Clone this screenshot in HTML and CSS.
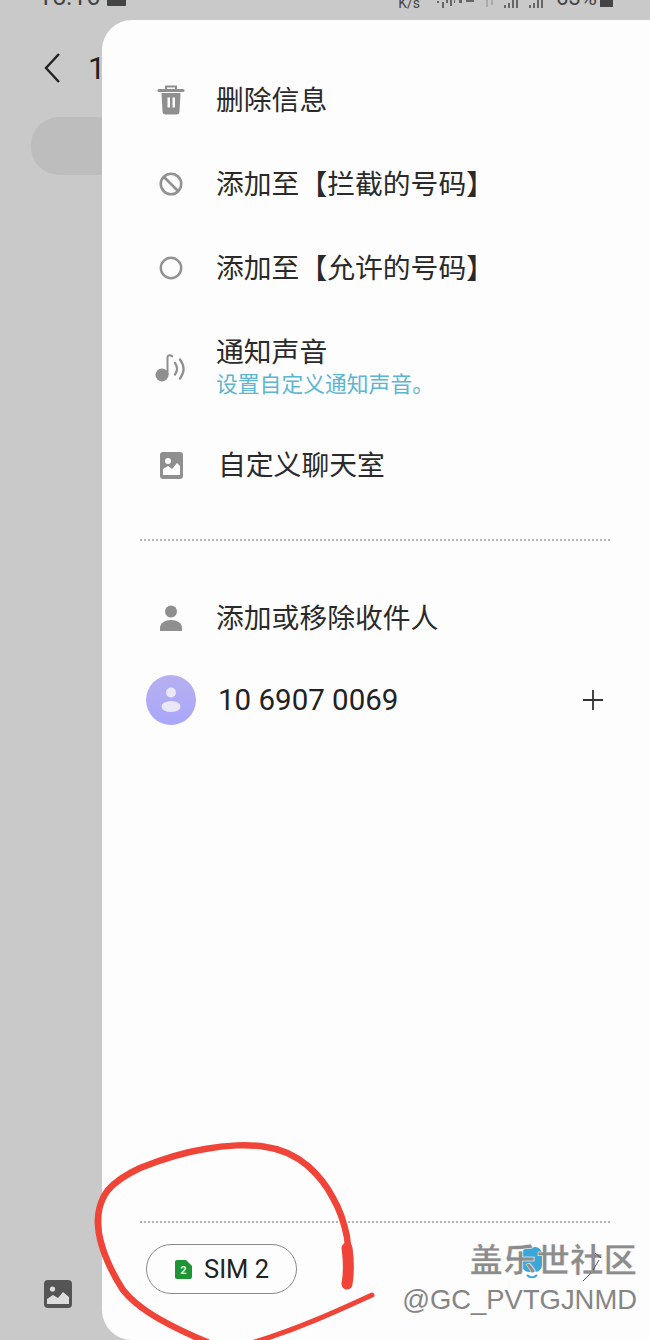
FILE: index.html
```html
<!DOCTYPE html>
<html lang="zh-CN">
<head>
    <meta charset="UTF-8">
    <meta name="viewport" content="width=device-width, initial-scale=1.0">
    <title>聊天室设置</title>
    <link rel="stylesheet" href="styles.css">
</head>
<body>
    <div class="screen">
        <!-- status bar, cut off by the top of the screenshot -->
        <div class="status-bar">
            <span class="status-time">15:16</span>
            <svg class="status-pic" width="19" height="14" viewBox="0 0 19 14"><rect width="19" height="14" rx="1" fill="#444"/></svg>
            <span class="status-speed">K/s</span>
            <svg class="status-signal" width="109" height="8" viewBox="0 0 109 8" fill="#666">
                <path d="M0 1h2v2H0zM5 2h2v6H5zM9 0h2v3H9zM13 0h2v6h-2zM17 0h1v3h-1zM22 0h3v3h-3zM29 0h8v2h-8z"/>
                <path d="M49 0h2v7h-2zM54 0h2v5h-2z" fill="#aaa"/>
                <path d="M67 5h2v3h-2zM71 3h2v5h-2zM75 0h2v8h-2zM79 0h2v8h-2zM92 5h2v3h-2zM96 3h2v5h-2zM100 0h2v8h-2zM104 0h2v8h-2z"/>
            </svg>
            <span class="status-battery">63%</span>
            <span class="battery-block"></span>
        </div>

        <!-- conversation behind the panel -->
        <div class="behind">
            <div class="behind-head">
                <svg width="18" height="32" viewBox="0 0 18 32"><path d="M16 2 3 16l13 14" fill="none" stroke="#222" stroke-width="2.4"/></svg>
                <span class="behind-title">1</span>
            </div>
            <div class="behind-bubble"></div>
            <svg class="behind-pic" width="28" height="28" viewBox="0 0 28 28">
                <rect width="28" height="28" rx="4" fill="#555"/>
                <circle cx="8.5" cy="9" r="2.6" fill="#ddd"/>
                <path d="M3 24v-5l6-4 5 3 5-6 6 5v7z" fill="#ddd"/>
            </svg>
        </div>

        <div class="panel">
            <ul class="menu">
                <li class="row">
                    <span class="row-icon">
                        <svg width="28" height="30" viewBox="0 0 28 30">
                            <path d="M9 4V1.500h10V4" fill="none" stroke="#8f8f8f" stroke-width="2"/>
                            <rect x="0.500" y="4" width="27" height="3" rx="1.500" fill="#8f8f8f"/>
                            <path d="M4.500 8h19l-1 18.500a3 3 0 0 1-3 3h-11a3 3 0 0 1-3-3z" fill="#8f8f8f"/>
                            <path d="M10.500 12.500h2.500v10h-2.500zM15.500 12.500H18v10h-2.500z" fill="#fff"/>
                        </svg>
                    </span>
                    <span class="row-label">删除信息</span>
                </li>
                <li class="row">
                    <span class="row-icon">
                        <svg width="24" height="24" viewBox="0 0 24 24" fill="none" stroke="#929292" stroke-width="2.600">
                            <circle cx="12" cy="12" r="10.200"/>
                            <path d="M5 5l14 14"/>
                        </svg>
                    </span>
                    <span class="row-label">添加至【拦截的号码】</span>
                </li>
                <li class="row">
                    <span class="row-icon">
                        <svg width="24" height="24" viewBox="0 0 24 24" fill="none" stroke="#929292" stroke-width="2.400">
                            <circle cx="12" cy="12" r="10.200"/>
                        </svg>
                    </span>
                    <span class="row-label">添加至【允许的号码】</span>
                </li>
                <li class="row row-tall">
                    <span class="row-icon">
                        <svg width="32" height="30" viewBox="0 0 32 30" fill="none">
                            <circle cx="7" cy="21" r="6.500" fill="#8f8f8f"/>
                            <path d="M12.500 21V3.500c0-1.500 1-2.500 2.500-2.200L18 2.500" stroke="#8f8f8f" stroke-width="2"/>
                            <path d="M20 9c2.500 3.500 2.500 8 0 11.500M25 5.500c4.500 6 4.500 13 0 19" stroke="#8f8f8f" stroke-width="2.200" stroke-linecap="round"/>
                        </svg>
                    </span>
                    <span class="row-text">
                        <span class="row-title">通知声音</span>
                        <span class="row-sub">设置自定义通知声音。</span>
                    </span>
                </li>
                <li class="row row-short">
                    <span class="row-icon">
                        <svg width="23" height="27" viewBox="0 0 23 27">
                            <rect width="23" height="27" rx="3" fill="#8f8f8f"/>
                            <circle cx="8" cy="9" r="3" fill="#fff"/>
                            <path d="M3 23v-6l5-3 4 3 5-6 3 3v9z" fill="#fff"/>
                        </svg>
                    </span>
                    <span class="row-label row-label-shift">自定义聊天室</span>
                </li>
            </ul>

            <div class="dots dots-top"></div>

            <ul class="menu">
                <li class="row">
                    <span class="row-icon">
                        <svg width="24" height="26" viewBox="0 0 24 26" fill="#8f8f8f">
                            <circle cx="12" cy="6.500" r="6"/>
                            <path d="M1 26v-3c0-5 5-8 11-8s11 3 11 8v3z"/>
                        </svg>
                    </span>
                    <span class="row-label">添加或移除收件人</span>
                </li>
                <li class="row row-contact">
                    <span class="avatar">
                        <svg width="22" height="26" viewBox="0 0 22 26" fill="#e9e7f8">
                            <circle cx="11" cy="5.500" r="5"/>
                            <ellipse cx="11" cy="19.500" rx="9.500" ry="5.500"/>
                        </svg>
                    </span>
                    <span class="row-number">10 6907 0069</span>
                    <svg class="row-add" width="22" height="22" viewBox="0 0 22 22"><path d="M11 1v20M1 11h20" stroke="#333" stroke-width="1.800"/></svg>
                </li>
            </ul>

            <div class="panel-foot">
                <div class="dots"></div>
                <div class="foot-row">
                    <span class="sim-pill">
                        <svg width="17" height="19" viewBox="0 0 17 19">
                            <path d="M2 0h9l6 6v11a2 2 0 0 1-2 2H2a2 2 0 0 1-2-2V2a2 2 0 0 1 2-2z" fill="#1e9437"/>
                            <text x="8.500" y="14" text-anchor="middle" class="sim-digit">2</text>
                        </svg>
                        SIM 2
                    </span>
                </div>
            </div>
        </div>

        <!-- red pen mark drawn over the screenshot -->
        <svg class="pen-mark" width="650" height="1340" viewBox="0 0 650 1340" fill="none" stroke="#f04438" stroke-linecap="round" stroke-linejoin="round">
            <path stroke-width="6.500" d="M347 1285C350 1270 349 1252 347 1237C344 1222 340 1210 333 1198C326 1184 318 1175 308 1166C296 1156 282 1149 266 1147C250 1144 225 1145 205 1149C180 1153 160 1160 140 1168C125 1175 115 1182 108 1190C100 1200 97 1215 98 1225C99 1245 110 1270 123 1290C135 1305 155 1320 207 1342"/>
            <path stroke-width="11" d="M347 1284C349 1272 349 1262 347 1248"/>
            <path stroke-width="5" d="M255 1342C300 1328 335 1312 372 1295"/>
        </svg>

        <!-- forum watermark -->
        <div class="watermark">
            <svg class="watermark-blot" width="24" height="34" viewBox="0 0 24 34">
                <rect x="2" width="20" height="25" rx="7" fill="#3aa7d8"/>
                <path d="M7 28c3 3 7 3 10 0" fill="none" stroke="#3aa7d8" stroke-width="2"/>
            </svg>
            <span class="watermark-name">盖乐世社区</span>
            <span class="watermark-user">@GC_PVTGJNMD</span>
            <svg class="watermark-scratch" width="22" height="32" viewBox="0 0 22 32">
                <path d="M14 2l6 5M18 9l-6 10M10 22l-8 8" fill="none" stroke="#555" stroke-width="1"/>
            </svg>
        </div>
    </div>
</body>
</html>
```

FILE: styles.css
```css
* {
    box-sizing: border-box;
}

body {
    margin: 0;
    background-color: #c9c9c9;
    font-family: "Noto Sans CJK SC", "Noto Sans", sans-serif;
    color: #222;
}

.screen {
    position: relative;
    width: 650px;
    height: 1340px;
    overflow: hidden;
}

.status-bar {
    display: flex;
    align-items: flex-end;
    height: 10px;
    padding-left: 38px;
    font-family: Roboto, sans-serif;
    color: #444;
}

.status-time {
    font-size: 25px;
    line-height: 26px;
}

.status-pic {
    margin-left: 7px;
    margin-bottom: 4px;
}

.status-speed {
    margin-left: 272px;
    font-size: 14px;
    line-height: 14px;
}

.status-signal {
    margin-left: 17px;
    margin-bottom: 2px;
}

.status-battery {
    margin-left: 10px;
    font-size: 22px;
    line-height: 24px;
}

.battery-block {
    width: 13px;
    height: 10px;
    margin-left: 3px;
    margin-bottom: 3px;
    background-color: #444;
}

.behind {
    display: flex;
    flex-direction: column;
    height: 1330px;
    padding-left: 31px;
}

.behind-head {
    display: flex;
    align-items: center;
    gap: 27px;
    height: 40px;
    margin-top: 38px;
    padding-left: 12px;
}

.behind-title {
    font-family: Roboto, sans-serif;
    font-size: 31px;
}

.behind-bubble {
    width: 120px;
    height: 58px;
    margin-top: 29px;
    border-radius: 28px;
    background-color: #bdbdbd;
}

.behind-pic {
    margin-top: auto;
    margin-left: 13px;
    margin-bottom: 32px;
}

.panel {
    position: absolute;
    top: 20px;
    left: 102px;
    right: 0;
    bottom: 0;
    display: flex;
    flex-direction: column;
    padding-top: 38px;
    border-radius: 30px 0 0 30px;
    background-color: #fdfdfd;
}

.menu {
    margin: 0;
    padding: 0;
    list-style: none;
}

.row {
    display: flex;
    align-items: center;
    gap: 20px;
    height: 84px;
    padding-left: 44px;
}

.row-tall {
    height: 117px;
}

.row-short {
    height: 77px;
}

.row-icon {
    display: flex;
    justify-content: center;
    align-items: center;
    width: 50px;
    flex-shrink: 0;
}

.row-text {
    display: flex;
    flex-direction: column;
    margin-top: -8px;
}

.row-label,
.row-title {
    font-size: 27.800px;
    line-height: 36px;
    color: #2a2a2a;
}

.row-label {
    margin-top: -5px;
}

.row-label-shift {
    margin-top: -6px;
    margin-left: 2px;
}

.row-sub {
    font-size: 21.800px;
    line-height: 30px;
    color: #5cb6cf;
}

.dots {
    height: 0;
    margin: 0 40px 0 38px;
    border-top: 2px dotted #b5b5b5;
}

.dots-top {
    margin-top: 35px;
    margin-bottom: 35px;
}

.avatar {
    display: flex;
    justify-content: center;
    align-items: center;
    width: 50px;
    height: 50px;
    margin-top: -2px;
    border-radius: 50%;
    background: linear-gradient(#b6aff0, #a9a7fb);
}

.row-contact {
    gap: 22px;
    height: 82px;
    padding-right: 46px;
}

.row-number {
    flex: 1;
    margin-top: -2px;
    font-family: Roboto, sans-serif;
    font-size: 29.500px;
    color: #222;
}

.row-add {
    margin-top: -2px;
}

.panel-foot {
    margin-top: auto;
    height: 119px;
}

.foot-row {
    padding: 21px 0 0 44px;
}

.sim-pill {
    display: inline-flex;
    align-items: center;
    gap: 12px;
    width: 151px;
    height: 50px;
    padding-left: 28px;
    border: 1.500px solid #8a8a8a;
    border-radius: 25px;
    font-family: Roboto, sans-serif;
    font-size: 25.500px;
    color: #222;
}

.sim-digit {
    font-family: Roboto, sans-serif;
    font-size: 11px;
    font-weight: 700;
    fill: #dff3df;
}

.pen-mark {
    position: absolute;
    top: 0;
    left: 0;
}

.watermark {
    position: absolute;
    right: 13px;
    top: 1238px;
    display: flex;
    flex-direction: column;
    align-items: flex-end;
}

.watermark-blot {
    position: absolute;
    top: 9px;
    left: 118px;
}

.watermark-scratch {
    position: absolute;
    top: 13px;
    right: 34px;
}

.watermark-name {
    position: relative;
    font-size: 33.500px;
    font-weight: 700;
    line-height: 40px;
    color: #8c8c8c;
    -webkit-text-stroke: 0.5px #fff;
}

.watermark-user {
    position: relative;
    font-family: "Liberation Sans", sans-serif;
    font-size: 27.400px;
    line-height: 44px;
    color: #858585;
}
```
